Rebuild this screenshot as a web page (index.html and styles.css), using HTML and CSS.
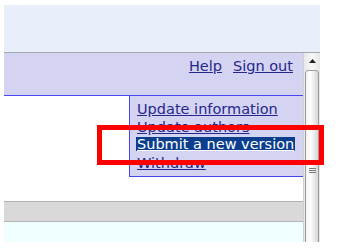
FILE: index.html
```html
<!DOCTYPE html>
<html>
<head>
<meta charset="utf-8">
<link rel="stylesheet" href="styles.css">
</head>
<body>
<div class="window">
  <div class="header"></div>
  <div class="viewport">
    <div class="content">
      <div class="topbar">
        <a class="link" href="#">Help</a>
        <a class="link" href="#">Sign out</a>
      </div>
      <div class="menu-row">
        <ul class="menu">
          <li><a class="link" href="#">Update information</a></li>
          <li><a class="link" href="#">Update authors</a></li>
          <li><a class="link selected" href="#">Submit a new version</a></li>
          <li><a class="link" href="#">Withdraw</a></li>
        </ul>
      </div>
      <div class="spacer"></div>
      <div class="grayband"></div>
      <div class="cyanband"></div>
    </div>
    <div class="scrollbar">
      <div class="arrow"><svg width="7" height="4" viewBox="0 0 7 4"><path d="M0 4 L3.5 0 L7 4 Z" fill="#202020"/></svg></div>
      <div class="thumb">
        <div class="grip"><span></span><span></span><span></span></div>
      </div>
    </div>
  </div>
</div>
<div class="callout"></div>
</body>
</html>
```
FILE: styles.css
```css
html, body {
  margin: 0;
  padding: 0;
  background: #ffffff;
}
body {
  width: 343px;
  height: 249px;
  position: relative;
  overflow: hidden;
  font-family: "DejaVu Sans", Verdana, sans-serif;
}
.window {
  margin: 5px 0 0 4px;
  width: 316px;
  height: 237px;
  display: flex;
  flex-direction: column;
}
.header {
  height: 47px;
  background: #e8eefa;
  border-bottom: 1px solid #a8a8b0;
  flex: none;
}
.viewport {
  flex: 1;
  display: flex;
  min-height: 0;
}
.content {
  width: 299px;
  display: flex;
  flex-direction: column;
  background: #ffffff;
}
.link {
  color: #26268c;
  text-decoration: underline;
  font-size: 14.5px;
  line-height: 18px;
}
.topbar {
  height: 38px;
  padding: 4px 10px 0 0;
  background: #d4d4f2;
  border-bottom: 1px solid #4646f0;
  display: flex;
  justify-content: flex-end;
  align-items: flex-start;
  gap: 11px;
}
.menu-row {
  display: flex;
  justify-content: flex-end;
}
.menu {
  list-style: none;
  margin: 0;
  padding: 4px 0 4px 7px;
  width: 166px;
  background: #d4d4f2;
  border-left: 1px solid #4646f0;
  border-bottom: 1px solid #4646f0;
}
.menu li {
  height: 18px;
  line-height: 18px;
  white-space: nowrap;
}
.selected {
  display: inline-block;
  line-height: 14px;
  height: 14px;
  vertical-align: 1px;
  background: #0b3f8e;
  color: #ffffff;
  padding: 0 1px 0 1px;
  margin-left: -1px;
}
.spacer {
  height: 24px;
}
.grayband {
  height: 19px;
  background: #d9d9d9;
  border-top: 1px solid #b2b2b2;
  border-bottom: 1px solid #b2b2b2;
}
.cyanband {
  height: 20px;
  background: #f0ffff;
}
.scrollbar {
  width: 17px;
  background: linear-gradient(to right, #e8e8e8, #f6f6f6 50%, #e6e6e6);
  border-left: 1px solid #d0d0d0;
  box-sizing: border-box;
  display: flex;
  flex-direction: column;
  align-items: center;
  overflow: hidden;
}
.arrow {
  height: 16px;
  width: 100%;
  display: flex;
  align-items: center;
  justify-content: center;
  flex: none;
}
.thumb {
  width: 14px;
  flex: 1;
  margin-top: 1px;
  min-height: 220px;
  border: 1px solid #9c9c9c;
  border-radius: 3px;
  box-sizing: border-box;
  background: linear-gradient(to right, #f2f2f2, #ffffff 35%, #d6d6d6);
  display: flex;
  flex-direction: column;
  align-items: center;
  padding-top: 97px;
}
.grip {
  display: flex;
  flex-direction: column;
  gap: 1px;
}
.grip span {
  display: block;
  width: 7px;
  height: 1px;
  background: #7a7a7a;
}
.callout {
  position: absolute;
  left: 97px;
  top: 125px;
  width: 217px;
  height: 30px;
  border: 5px solid #ff0000;
}
```
